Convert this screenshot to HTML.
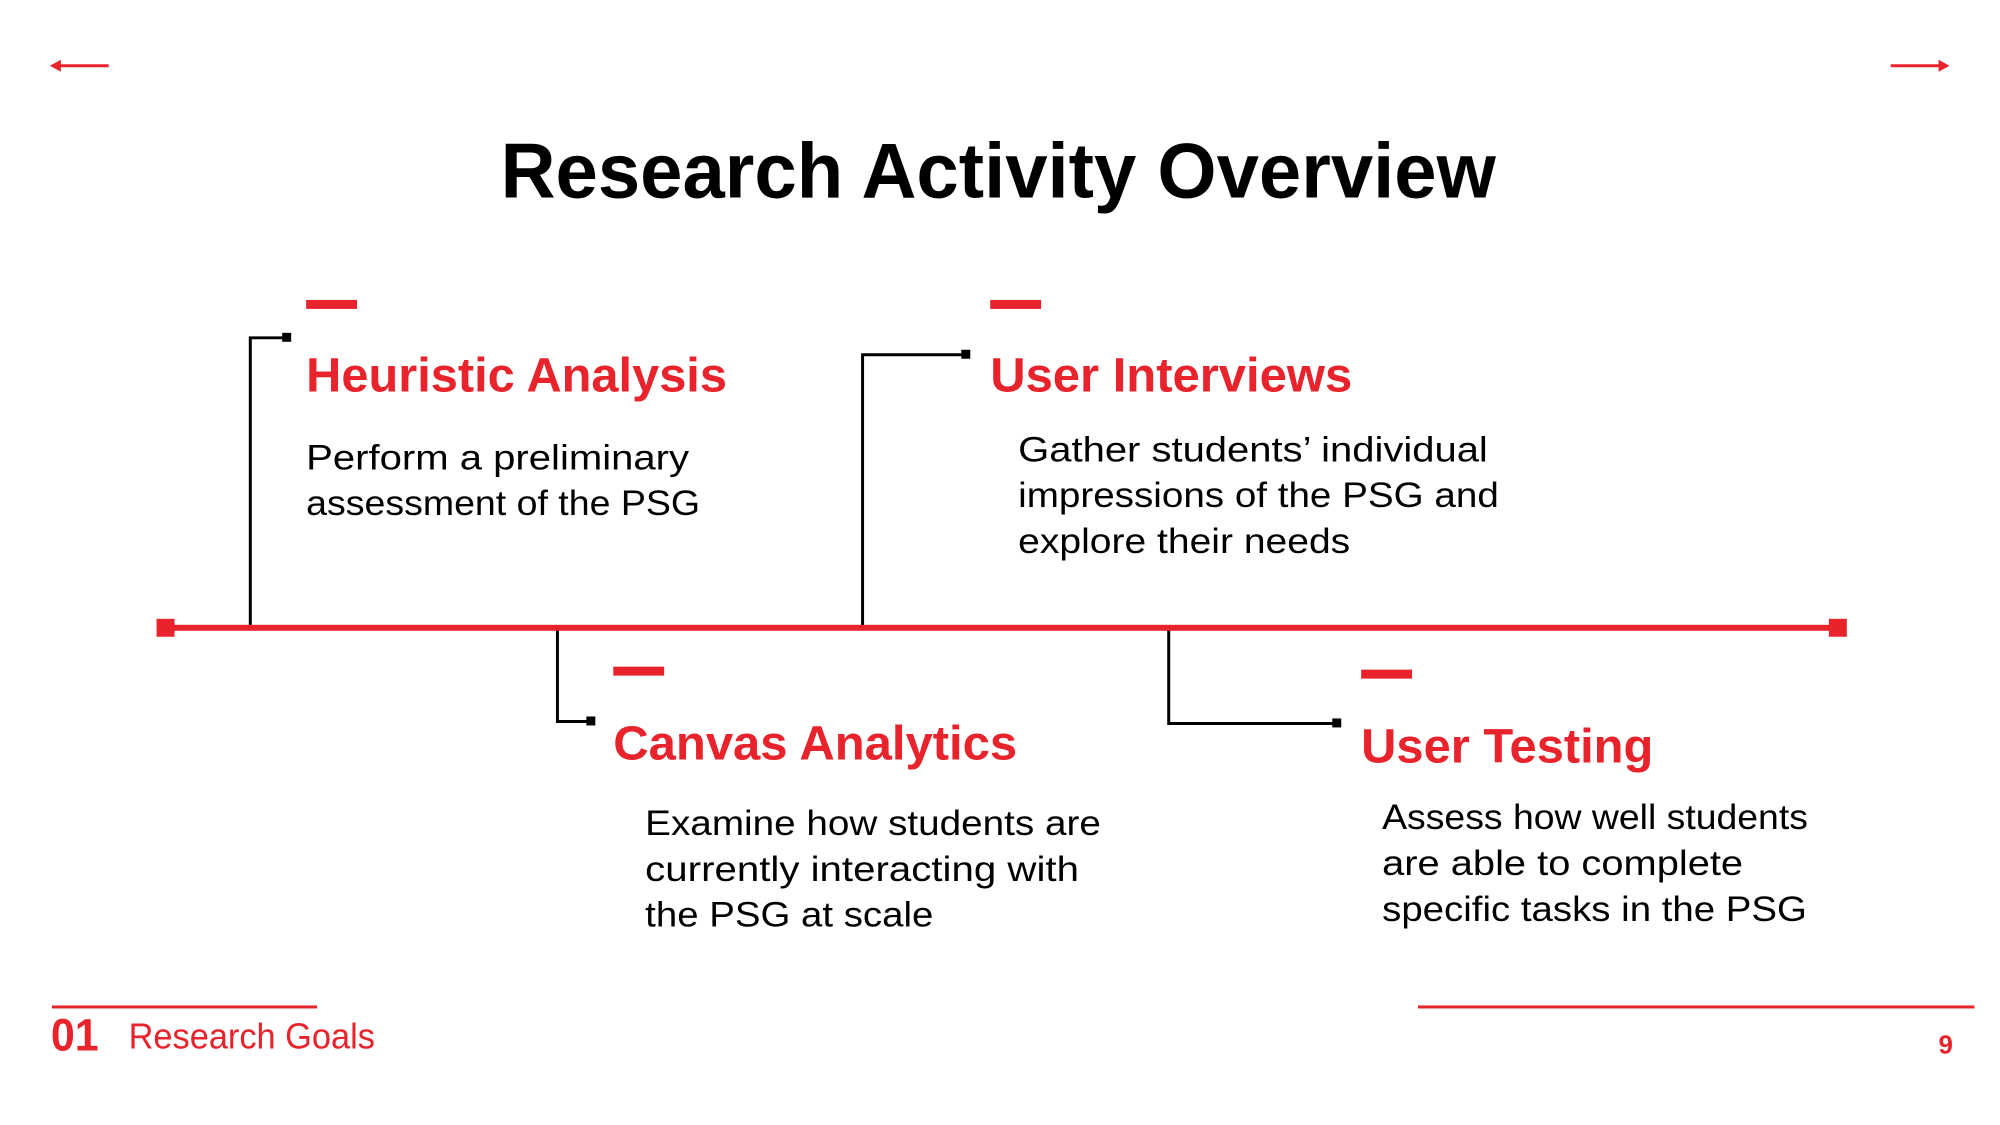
<!DOCTYPE html>
<html><head><meta charset="utf-8"><style>
html,body{margin:0;padding:0;background:#fff;}
svg{display:block;}
text{font-family:"Liberation Sans",sans-serif;}
</style></head><body>
<svg width="2000" height="1125" viewBox="0 0 2000 1125" xmlns="http://www.w3.org/2000/svg">
<rect width="2000" height="1125" fill="#fff"/>
<g transform="scale(0.9972 0.9965)">
<line x1="58" y1="66" x2="109" y2="66" stroke="#e8232b" stroke-width="3"/>
<path d="M50 66 L61 60 L61 72 Z" fill="#e8232b"/>
<line x1="1896" y1="66" x2="1946" y2="66" stroke="#e8232b" stroke-width="3"/>
<path d="M1955 66 L1944 60 L1944 72 Z" fill="#e8232b"/>
<text x="502" y="198" font-size="78" font-weight="bold" fill="#000" textLength="998" lengthAdjust="spacingAndGlyphs">Research Activity Overview</text>
<g stroke="#000" stroke-width="3" fill="none">
<path d="M251 630 V339 H285"/>
<path d="M865 630 V356 H966"/>
<path d="M559 630 V724 H590"/>
<path d="M1172 630 V726 H1338"/>
</g>
<g fill="#000">
<rect x="283" y="334" width="9" height="9"/>
<rect x="964" y="351" width="9" height="9"/>
<rect x="588" y="719" width="9" height="9"/>
<rect x="1336" y="721" width="9" height="9"/>
</g>
<rect x="158" y="627" width="1690" height="6" fill="#e8232b"/>
<rect x="157" y="621" width="18" height="18" fill="#e8232b"/>
<rect x="1834" y="621" width="18" height="18" fill="#e8232b"/>
<g fill="#e8232b">
<rect x="307" y="301" width="51" height="9"/>
<rect x="993" y="301" width="51" height="9"/>
<rect x="615" y="669" width="51" height="9"/>
<rect x="1365" y="672" width="51" height="9"/>
</g>
<g fill="#e8232b" font-size="48" font-weight="bold">
<text x="307" y="393" textLength="422" lengthAdjust="spacingAndGlyphs">Heuristic Analysis</text>
<text x="993" y="393" textLength="363" lengthAdjust="spacingAndGlyphs">User Interviews</text>
<text x="615" y="762" textLength="405" lengthAdjust="spacingAndGlyphs">Canvas Analytics</text>
<text x="1365" y="765" textLength="293" lengthAdjust="spacingAndGlyphs">User Testing</text>
</g>
<g fill="#000" font-size="35">
<text x="307" y="471" textLength="384" lengthAdjust="spacingAndGlyphs">Perform a preliminary</text>
<text x="307" y="517" textLength="395" lengthAdjust="spacingAndGlyphs">assessment of the PSG</text>
<text x="1021" y="463" textLength="471" lengthAdjust="spacingAndGlyphs">Gather students’ individual</text>
<text x="1021" y="509" textLength="482" lengthAdjust="spacingAndGlyphs">impressions of the PSG and</text>
<text x="1021" y="555" textLength="333" lengthAdjust="spacingAndGlyphs">explore their needs</text>
<text x="647" y="838" textLength="457" lengthAdjust="spacingAndGlyphs">Examine how students are</text>
<text x="647" y="884" textLength="435" lengthAdjust="spacingAndGlyphs">currently interacting with</text>
<text x="647" y="930" textLength="289" lengthAdjust="spacingAndGlyphs">the PSG at scale</text>
<text x="1386" y="832" textLength="427" lengthAdjust="spacingAndGlyphs">Assess how well students</text>
<text x="1386" y="878" textLength="362" lengthAdjust="spacingAndGlyphs">are able to complete</text>
<text x="1386" y="924" textLength="426" lengthAdjust="spacingAndGlyphs">specific tasks in the PSG</text>
</g>
<rect x="52" y="1009" width="266" height="3" fill="#e8232b"/>
<rect x="1422" y="1009" width="558" height="3" fill="#e8232b"/>
<text x="51" y="1054" font-size="46" font-weight="bold" fill="#e8232b" textLength="48" lengthAdjust="spacingAndGlyphs">01</text>
<text x="129" y="1052" font-size="36" fill="#e8232b" textLength="247" lengthAdjust="spacingAndGlyphs">Research Goals</text>
<text x="1944" y="1057" font-size="26" font-weight="bold" fill="#e8232b">9</text>
</g>
</svg>
</body></html>
